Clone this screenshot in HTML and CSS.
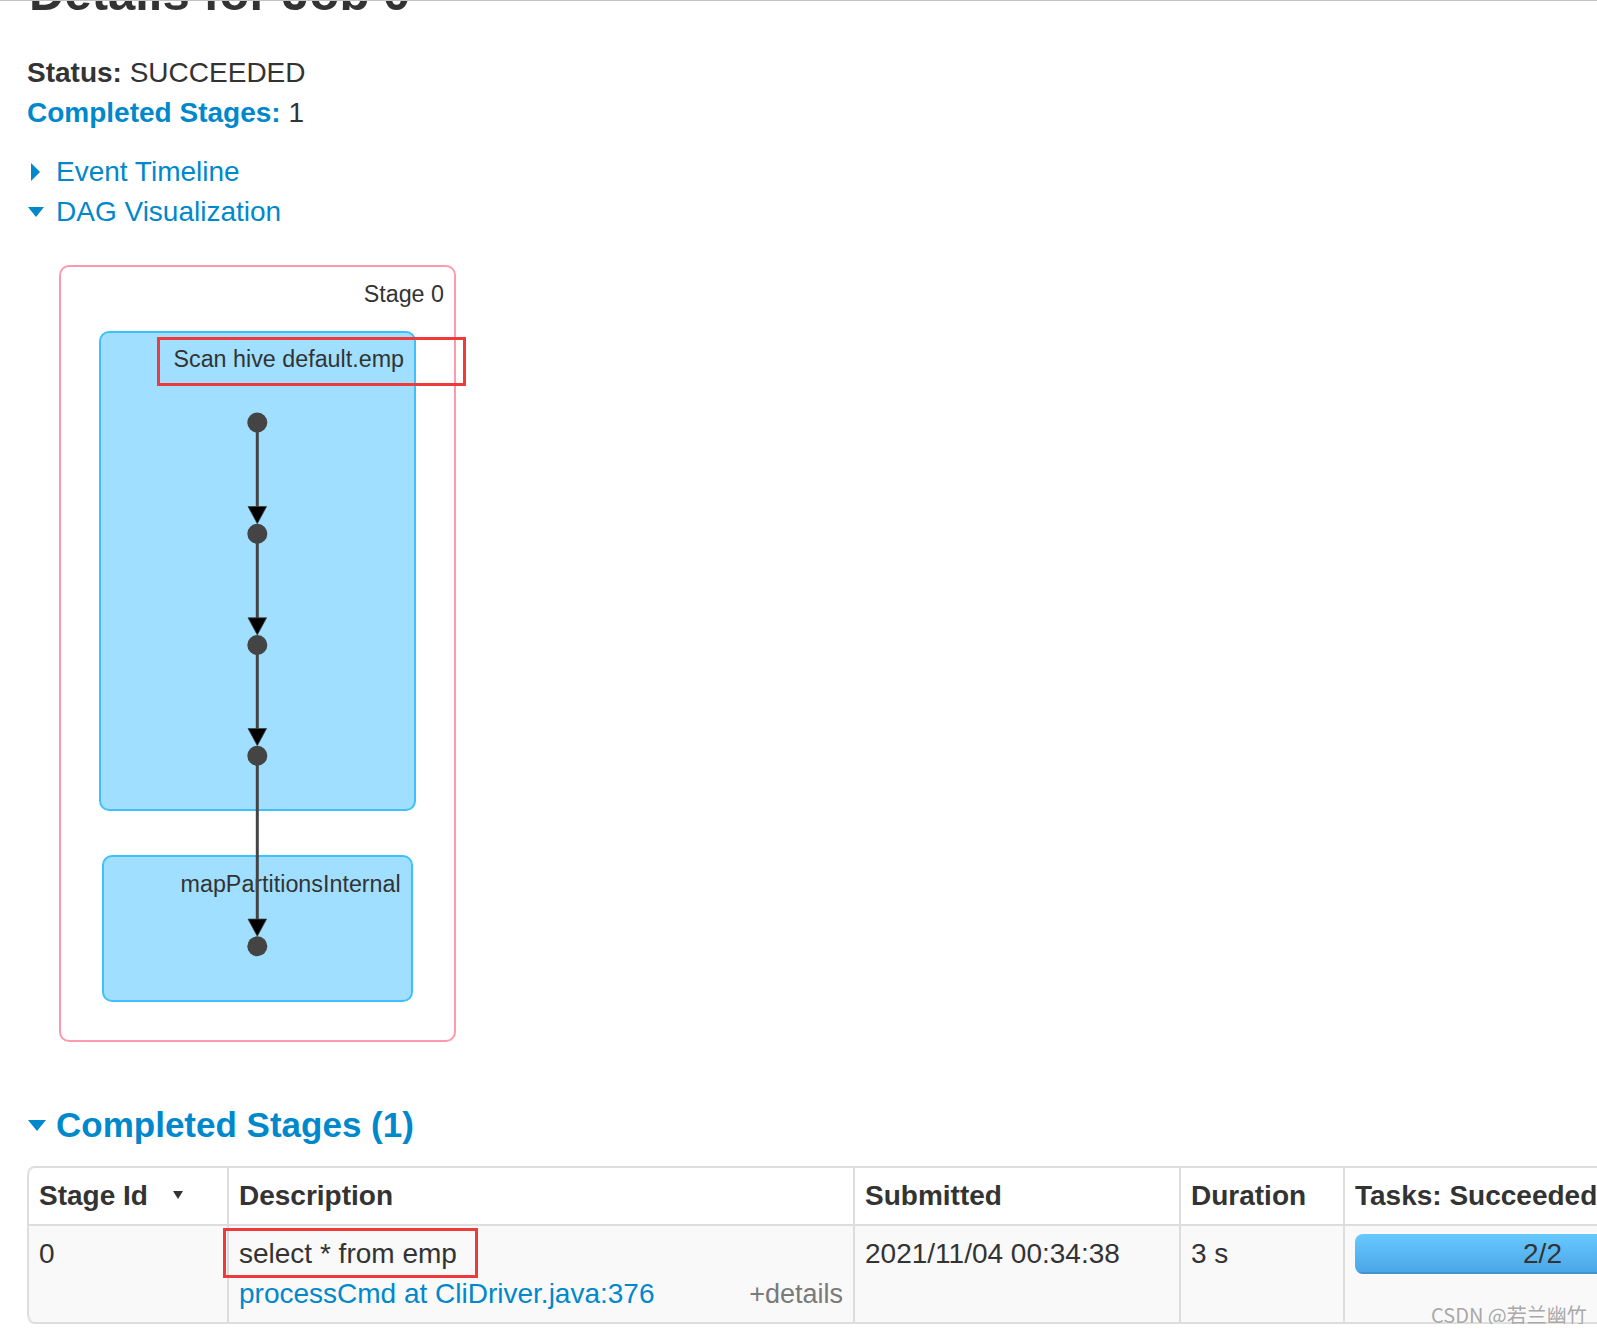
FILE: index.html
```html
<!DOCTYPE html>
<html>
<head>
    <meta charset="utf-8"/>
    <title>Details for Job 0</title>
    <link rel="stylesheet" href="styles.css">
</head>
<body>
    <div class="container">
        <h3 class="page-title">Details for Job 0</h3>
        <ul class="job-info">
            <li><strong>Status:</strong> SUCCEEDED</li>
            <li><a href="#completed"><strong>Completed Stages:</strong></a> 1</li>
        </ul>
        <div class="toggle">
            <span class="arrow-box"><span class="arrow-closed"></span></span>
            <a href="#" class="toggle-link">Event Timeline</a>
        </div>
        <div class="toggle">
            <span class="arrow-box"><span class="arrow-open"></span></span>
            <a href="#" class="toggle-link">DAG Visualization</a>
        </div>

        <div class="dag-viz">
            <svg width="470" height="810" viewBox="0 0 470 810">
                <rect class="stage-cluster" x="33" y="16" width="395" height="775" rx="9"/>
                <text class="dag-label" x="417" y="51.7">Stage 0</text>

                <rect class="rdd-cluster" x="73" y="82" width="315" height="478" rx="9"/>
                <text class="dag-label" x="377" y="117.3">Scan hive default.emp</text>

                <rect class="rdd-cluster" x="76" y="606" width="309" height="145" rx="9"/>
                <text class="dag-label" x="373.7" y="641.7">mapPartitionsInternal</text>

                <!-- edges -->
                <line class="edge" x1="230.3" y1="172.5" x2="230.3" y2="267"/>
                <polygon class="arrowhead" points="221,256.5 239.6,256.5 230.3,273.7"/>
                <line class="edge" x1="230.3" y1="283.7" x2="230.3" y2="378"/>
                <polygon class="arrowhead" points="221,367.8 239.6,367.8 230.3,385"/>
                <line class="edge" x1="230.3" y1="395" x2="230.3" y2="489"/>
                <polygon class="arrowhead" points="221,478.5 239.6,478.5 230.3,495.7"/>
                <line class="edge" x1="230.3" y1="505.7" x2="230.3" y2="680"/>
                <polygon class="arrowhead" points="221,669.1 239.6,669.1 230.3,686.3"/>

                <!-- operators -->
                <circle class="node" cx="230.3" cy="172.5" r="10"/>
                <circle class="node" cx="230.3" cy="283.7" r="10"/>
                <circle class="node" cx="230.3" cy="395" r="10"/>
                <circle class="node" cx="230.3" cy="505.7" r="10"/>
                <circle class="node" cx="230.3" cy="696.3" r="10"/>
            </svg>
        </div>

        <h4 class="section-title" id="completed">
            <span class="arrow-box"><span class="arrow-open"></span></span>
            <a href="#">Completed Stages (1)</a>
        </h4>

        <table class="stages">
            <colgroup>
                <col class="col-id">
                <col class="col-desc">
                <col class="col-submitted">
                <col class="col-duration">
                <col class="col-tasks">
            </colgroup>
            <thead>
                <tr>
                    <th>Stage Id <span class="sort-arrow"></span></th>
                    <th>Description</th>
                    <th>Submitted</th>
                    <th>Duration</th>
                    <th>Tasks: Succeeded/Total</th>
                </tr>
            </thead>
            <tbody>
                <tr>
                    <td>0</td>
                    <td>
                        <div>select * from emp</div>
                        <div class="desc-line">
                            <a href="#">processCmd at CliDriver.java:376</a>
                            <span class="expand-details">+details</span>
                        </div>
                    </td>
                    <td>2021/11/04 00:34:38</td>
                    <td>3 s</td>
                    <td>
                        <div class="progress">
                            <span class="progress-label">2/2</span>
                            <div class="bar" style="width: 100%"></div>
                        </div>
                    </td>
                </tr>
            </tbody>
        </table>
    </div>

    <div class="mark mark-scan"></div>
    <div class="mark mark-desc"></div>
    <div class="watermark">CSDN @若兰幽竹</div>
</body>
</html>
```

FILE: styles.css
```css
body {
    margin: 0;
    border-top: 1px solid #c2c2c2;
    font-family: "Liberation Sans", Arial, sans-serif;
    font-size: 28px;
    line-height: 40px;
    color: #333;
    background-color: #fff;
    overflow: hidden;
    position: relative;
}
a {
    color: #0088cc;
    text-decoration: none;
}
.container {
    padding-left: 27px;
}
.page-title {
    font-size: 49px;
    line-height: 80px;
    font-weight: bold;
    margin: -48px 0 20px 2px;
}
.job-info {
    list-style: none;
    margin: 0 0 19px;
    padding: 0;
}
.toggle {
    display: flex;
    align-items: center;
    height: 40px;
}
.arrow-box {
    display: inline-flex;
    align-items: center;
    width: 29px;
    flex-shrink: 0;
}
.arrow-closed {
    width: 0;
    height: 0;
    margin-left: 4px;
    border-top: 9px solid transparent;
    border-bottom: 9px solid transparent;
    border-left: 9px solid #0088cc;
}
.arrow-open {
    width: 0;
    height: 0;
    margin-left: 1px;
    border-left: 8.5px solid transparent;
    border-right: 8.5px solid transparent;
    border-top: 10px solid #0088cc;
}
.toggle-link {
    font-size: 28px;
}
.dag-viz {
    margin-top: 18px;
}
.dag-viz svg {
    display: block;
}
.stage-cluster {
    fill: #fff;
    stroke: #ff99ac;
    stroke-width: 2;
}
.rdd-cluster {
    fill: #a0dfff;
    stroke: #3ec0ff;
    stroke-width: 2;
}
.dag-label {
    font-family: "Liberation Sans", Arial, sans-serif;
    font-size: 23.3px;
    fill: #333;
    text-anchor: end;
}
.edge {
    stroke: #444;
    stroke-width: 3;
}
.arrowhead {
    fill: #000;
    stroke: #444;
    stroke-width: 0.8;
}
.node {
    fill: #444;
}
.section-title {
    display: flex;
    align-items: center;
    font-size: 35px;
    line-height: 40px;
    font-weight: bold;
    margin: 45px 0 21px;
}
.section-title .arrow-open {
    margin-left: 1px;
    border-left-width: 9px;
    border-right-width: 9px;
    border-top-width: 11px;
}
.stages {
    table-layout: fixed;
    width: 1713px;
    border-collapse: separate;
    border-spacing: 0;
    border: 2px solid #ddd;
    border-left: 0;
    border-radius: 8px;
}
.col-id { width: 200px; }
.col-desc { width: 626px; }
.col-submitted { width: 326px; }
.col-duration { width: 164px; }
.col-tasks { width: 397px; }
.stages th,
.stages td {
    padding: 8px 10px;
    border-left: 2px solid #ddd;
    text-align: left;
    vertical-align: top;
}
.stages th {
    font-weight: bold;
    background-color: #fff;
}
.stages thead th:first-child {
    border-top-left-radius: 8px;
}
.stages tbody td:first-child {
    border-bottom-left-radius: 8px;
}
.stages td {
    border-top: 2px solid #ddd;
    background-color: #f9f9f9;
}
.sort-arrow {
    display: inline-block;
    width: 0;
    height: 0;
    margin-left: 17px;
    vertical-align: 6px;
    border-left: 5px solid transparent;
    border-right: 5px solid transparent;
    border-top: 8px solid #333;
}
.desc-line {
    display: flex;
    justify-content: space-between;
}
.expand-details {
    font-size: 27px;
    color: #7a7a7a;
}
.progress {
    position: relative;
    height: 40px;
    border-radius: 8px;
    overflow: hidden;
    background-color: #f5f5f5;
}
.progress .bar {
    height: 100%;
    background-image: linear-gradient(to bottom, #67c9ff, #4aa4e5);
    box-shadow: inset 0 -2px 0 rgba(0,0,0,0.1);
}
.progress-label {
    position: absolute;
    left: 0;
    right: 0;
    top: 0;
    text-align: center;
    line-height: 40px;
    color: #333;
}
.mark {
    position: absolute;
    border: 3px solid #ee3a3a;
}
.mark-scan {
    left: 157px;
    top: 336px;
    width: 303px;
    height: 43px;
}
.mark-desc {
    left: 223px;
    top: 1227px;
    width: 249px;
    height: 44px;
}
.watermark {
    position: absolute;
    left: 1431px;
    top: 1304px;
    font-family: "Noto Sans CJK SC", sans-serif;
    font-size: 20px;
    line-height: 20px;
    color: #a8a8a8;
    text-shadow: 0 0 2px #fff;
    white-space: nowrap;
}
```
